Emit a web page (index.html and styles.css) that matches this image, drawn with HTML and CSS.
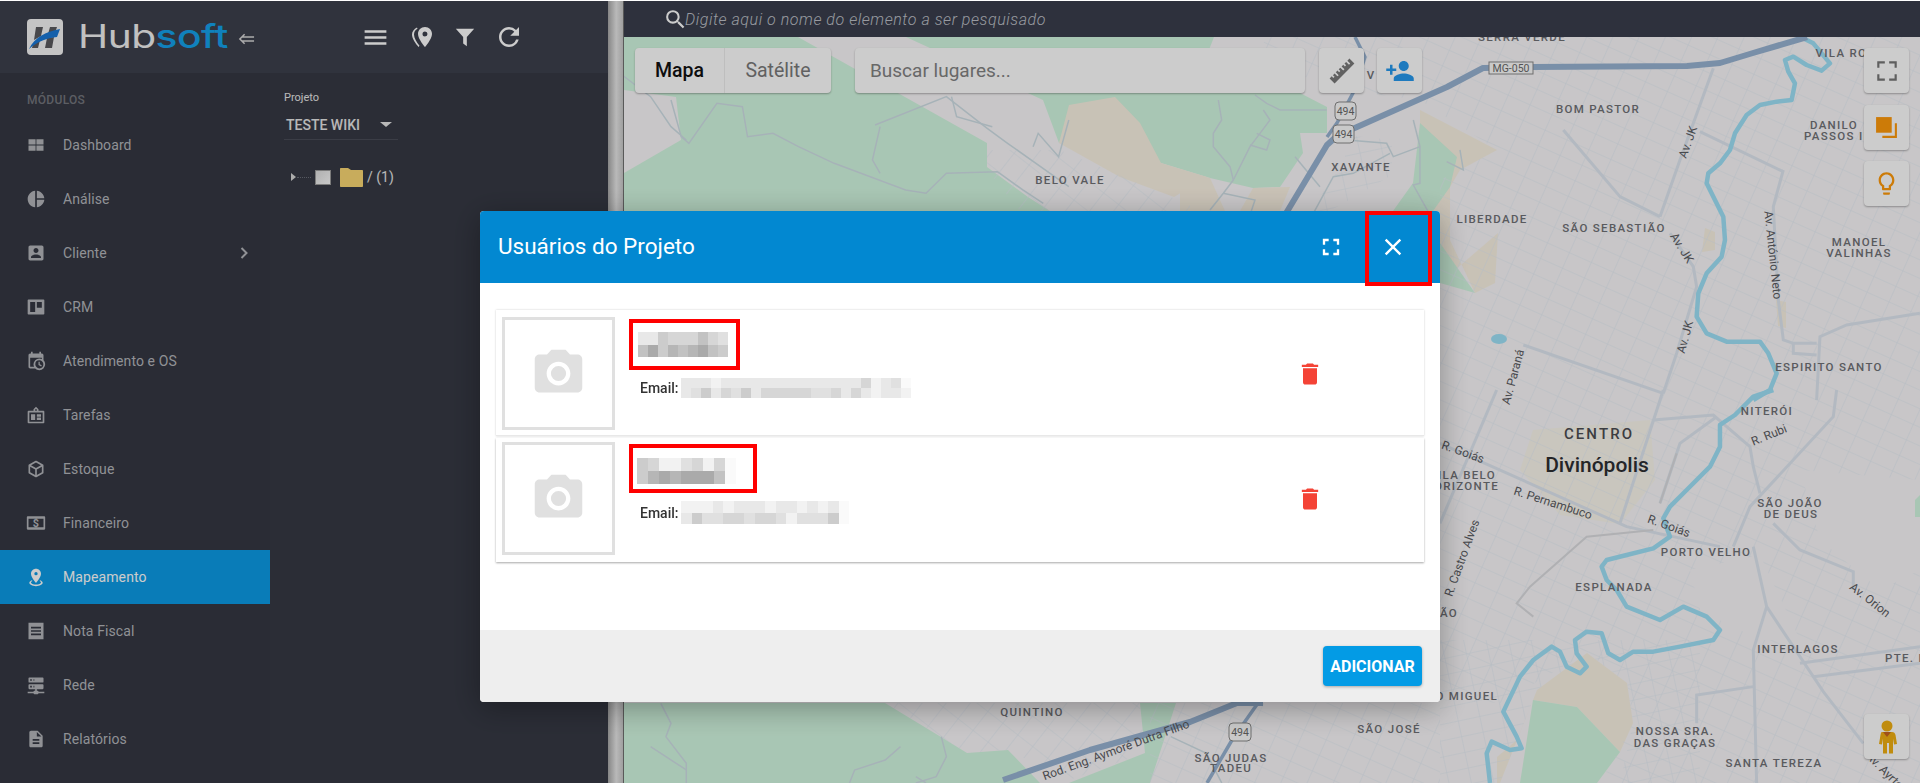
FILE: index.html
```html
<!DOCTYPE html>
<html lang="pt-BR">
<head>
<meta charset="utf-8">
<title>Hubsoft - Mapeamento</title>
<link rel="stylesheet" href="styles.css">
</head>
<body>
<div class="app">
  <aside class="sidebar">
    <div class="brand">
      <svg class="logo" viewBox="0 0 36 36">
        <rect width="36" height="36" rx="4" fill="#f6f6f6"/>
        <path d="M9 8h7l-2 9-7 4zM6 25l7-4-2 8H5zM23 8h7l-2 6-7 1zM20 19l7-1-2 11h-7z" fill="#5a5a5e"/>
        <path d="M2 30C8 18 18 13 33 10l-3 8C20 19 11 22 2 30z" fill="#1a78d6"/>
      </svg>
      <span class="wordmark"><span class="word-hub">Hub</span><span class="word-soft">soft</span></span>
      <svg class="collapse" viewBox="0 0 18 12"><path d="M7 1L2 6l5 5M4 4h13M4 8h13" fill="none" stroke="#d8d8d8" stroke-width="1.6"/></svg>
    </div>
    <div class="nav-title">MÓDULOS</div>
    <ul class="nav">
      <li class="nav-item"><svg class="nav-icon" viewBox="0 0 24 24"><path d="M3 5h8.500v6.500H3zM12.500 5H21v6.500h-8.500zM3 12.500h8.500V19H3zM12.500 12.500H21V19h-8.500z"/></svg>Dashboard</li>
      <li class="nav-item"><svg class="nav-icon" viewBox="0 0 24 24"><path d="M11 2v20c-5.070-.5-9-4.790-9-10s3.930-9.500 9-10zm2.030 0v8.990H22c-.47-4.740-4.240-8.520-8.970-8.990zm0 11.010V22c4.740-.47 8.500-4.250 8.970-8.990h-8.970z"/></svg>Análise</li>
      <li class="nav-item"><svg class="nav-icon" viewBox="0 0 24 24"><path d="M3 5v14c0 1.100.89 2 2 2h14c1.100 0 2-.9 2-2V5c0-1.100-.9-2-2-2H5c-1.110 0-2 .9-2 2zm12 4c0 1.660-1.340 3-3 3s-3-1.340-3-3 1.340-3 3-3 3 1.340 3 3zm-9 8c0-2 4-3.100 6-3.100s6 1.100 6 3.100v1H6v-1z"/></svg>Cliente<svg class="nav-chevron" viewBox="0 0 8 12"><path d="M1.500 1l5 5-5 5" fill="none" stroke="currentColor" stroke-width="2"/></svg></li>
      <li class="nav-item"><svg class="nav-icon" viewBox="0 0 24 24"><path d="M3 3h18c.6 0 1 .4 1 1v16c0 .6-.4 1-1 1H3c-.6 0-1-.4-1-1V4c0-.6.4-1 1-1zm2 3v12h6V6H5zm8 0v7h6V6h-6z"/></svg>CRM</li>
      <li class="nav-item"><svg class="nav-icon" viewBox="0 0 24 24"><path d="M15,13H16.500V15.820L18.940,17.230L18.190,18.530L15,16.690V13M19,8H5V19H9.670C9.240,18.090 9,17.070 9,16A7,7 0 0,1 16,9C17.070,9 18.090,9.240 19,9.670V8M5,21C3.890,21 3,20.100 3,19V5C3,3.890 3.890,3 5,3H6V1H8V3H16V1H18V3H19A2,2 0 0,1 21,5V11.100C22.240,12.360 23,14.090 23,16A7,7 0 0,1 16,23C14.090,23 12.360,22.240 11.100,21H5M16,11.150A4.850,4.850 0 0,0 11.150,16C11.150,18.680 13.320,20.850 16,20.850A4.850,4.850 0 0,0 20.850,16C20.850,13.320 18.680,11.150 16,11.150Z"/></svg>Atendimento e OS</li>
      <li class="nav-item"><svg class="nav-icon" viewBox="0 0 24 24"><path fill-rule="evenodd" d="M3 7h6V5l3-3 3 3v2h6c.6 0 1 .4 1 1v13c0 .6-.4 1-1 1H3c-.6 0-1-.4-1-1V8c0-.6.4-1 1-1zm1 2v11h16V9H4zm2 2h5v7H6zm7 0h5v3h-5zm0 4h5v3h-5zM11 5v2h2V5z"/></svg>Tarefas</li>
      <li class="nav-item"><svg class="nav-icon" viewBox="0 0 24 24"><path d="M21,16.500C21,16.880 20.790,17.210 20.470,17.380L12.570,21.820C12.410,21.940 12.210,22 12,22C11.790,22 11.590,21.940 11.430,21.820L3.530,17.380C3.210,17.210 3,16.880 3,16.500V7.500C3,7.120 3.210,6.790 3.530,6.620L11.430,2.180C11.590,2.060 11.790,2 12,2C12.210,2 12.410,2.060 12.570,2.180L20.470,6.620C20.790,6.790 21,7.120 21,7.500V16.500M12,4.150L6.040,7.500L12,10.850L17.960,7.500L12,4.150M5,15.910L11,19.290V12.580L5,9.210V15.910M19,15.910V9.210L13,12.580V19.290L19,15.910Z"/></svg>Estoque</li>
      <li class="nav-item"><svg class="nav-icon" viewBox="0 0 24 24"><path fill-rule="evenodd" d="M2 4h20c.6 0 1 .4 1 1v14c0 .6-.4 1-1 1H2c-.6 0-1-.4-1-1V5c0-.6.4-1 1-1zm1 3v10h18V7H3z"/><text class="nav-icon-glyph" x="12" y="16.500">$</text></svg>Financeiro</li>
      <li class="nav-item is-active"><svg class="nav-icon" viewBox="0 0 24 24"><path d="M12,2C15.310,2 18,4.660 18,7.950C18,12.410 12,19 12,19C12,19 6,12.410 6,7.950C6,4.660 8.690,2 12,2M12,6A2,2 0 0,0 10,8A2,2 0 0,0 12,10A2,2 0 0,0 14,8A2,2 0 0,0 12,6M20,19C20,21.210 16.420,23 12,23C7.580,23 4,21.210 4,19C4,17.710 5.220,16.560 7.110,15.830L7.750,16.740C6.670,17.190 6,17.810 6,18.500C6,19.880 8.690,21 12,21C15.310,21 18,19.880 18,18.500C18,17.810 17.330,17.190 16.250,16.740L16.890,15.830C18.780,16.560 20,17.710 20,19Z"/></svg>Mapeamento</li>
      <li class="nav-item"><svg class="nav-icon" viewBox="0 0 24 24"><path fill-rule="evenodd" d="M3 2h18v20H3zm3 5v2h12V7zm0 4v2h12v-2zm0 4v2h12v-2z"/></svg>Nota Fiscal</li>
      <li class="nav-item"><svg class="nav-icon" viewBox="0 0 24 24"><path d="M13,19H14A1,1 0 0,1 15,20H22V22H15A1,1 0 0,1 14,23H10A1,1 0 0,1 9,22H2V20H9A1,1 0 0,1 10,19H11V17H4A1,1 0 0,1 3,16V12A1,1 0 0,1 4,11H20A1,1 0 0,1 21,12V16A1,1 0 0,1 20,17H13V19M4,3H20A1,1 0 0,1 21,4V8A1,1 0 0,1 20,9H4A1,1 0 0,1 3,8V4A1,1 0 0,1 4,3M9,7H10V5H9V7M9,15H10V13H9V15M5,5V7H7V5H5M5,13V15H7V13H5Z"/></svg>Rede</li>
      <li class="nav-item"><svg class="nav-icon" viewBox="0 0 24 24"><path d="M14 2H6c-1.100 0-1.990.9-1.990 2L4 20c0 1.100.89 2 1.990 2H18c1.100 0 2-.9 2-2V8l-6-6zm2 16H8v-2h8v2zm0-4H8v-2h8v2zm-3-5V3.500L18.500 9H13z"/></svg>Relatórios</li>
    </ul>
  </aside>

  <section class="panel">
    <div class="panel-head">
      <svg class="tool tool-menu" viewBox="0 0 24 24"><path d="M3 18h18v-2H3v2zm0-5h18v-2H3v2zm0-7v2h18V6H3z"/></svg>
      <svg class="tool tool-pin" viewBox="0 0 24 24"><path fill-rule="evenodd" d="M15 2c-4 0-7 3-7 7 0 5 7 13 7 13s7-8 7-13c0-4-3-7-7-7zm0 9.500a2.500 2.500 0 110-5 2.500 2.500 0 010 5z"/><path d="M7 2.500C4 4 2 6.500 2 9.500c0 4 3.500 9 6.500 12.500l1-1.300C6.500 17 4 13 4 9.500 4 7 5.300 5 7.500 3.800z"/></svg>
      <svg class="tool tool-filter" viewBox="0 0 24 24"><path d="M2 3h20l-8 9v10l-4-3v-7z"/></svg>
      <svg class="tool tool-refresh" viewBox="0 0 24 24"><path d="M17.650 6.350A7.960 7.960 0 0012 4c-4.420 0-7.990 3.580-7.990 8s3.570 8 7.990 8c3.730 0 6.840-2.550 7.730-6h-2.080A5.990 5.990 0 0112 18c-3.310 0-6-2.690-6-6s2.690-6 6-6c1.660 0 3.140.69 4.220 1.780L13 11h7V4l-2.350 2.350z"/></svg>
    </div>
    <div class="panel-body">
      <div class="field-label">Projeto</div>
      <div class="select"><span>TESTE WIKI</span><i class="select-caret"></i></div>
      <div class="tree-row">
        <i class="tree-arrow"></i><i class="tree-line"></i><i class="tree-check"></i>
        <svg class="tree-folder" viewBox="0 0 23 19"><path d="M1 0h7l3 2h11c.6 0 1 .4 1 1v15c0 .6-.4 1-1 1H1c-.6 0-1-.4-1-1V1c0-.6.4-1 1-1z"/></svg>
        <span class="tree-text">/ (1)</span>
      </div>
    </div>
  </section>

  <div class="gutter"></div>

  <main class="main">
    <div class="searchbar">
      <svg class="search-icon" viewBox="0 0 24 24"><path d="M15.500 14h-.79l-.28-.27A6.470 6.470 0 0016 9.500 6.500 6.500 0 109.500 16c1.610 0 3.090-.59 4.230-1.570l.27.28v.79l5 4.990L20.490 19l-4.990-5zm-6 0C7.010 14 5 11.990 5 9.500S7.010 5 9.500 5 14 7.010 14 9.500 11.990 14 9.500 14z"/></svg>
      <span class="search-hint">Digite aqui o nome do elemento a ser pesquisado</span>
    </div>
    <div class="map">
      <svg class="map-canvas" viewBox="624 37 1296 746">
        <defs>
          <pattern id="grid-a" patternUnits="userSpaceOnUse" width="24" height="17" patternTransform="rotate(24)"><path d="M0 0H24M0 0V17" class="grid-line"/></pattern>
          <pattern id="grid-b" patternUnits="userSpaceOnUse" width="19" height="24" patternTransform="rotate(38)"><path d="M0 0H19M0 0V24" class="grid-line"/></pattern>
          <pattern id="grid-c" patternUnits="userSpaceOnUse" width="22" height="16" patternTransform="rotate(-12)"><path d="M0 0H22M0 0V16" class="grid-line"/></pattern>
        </defs>
        <rect class="land" x="624" y="37" width="1296" height="746"/>

        <!-- parks and built-up zones -->
        <polygon class="park" points="624,37 798,37 987,143 987,167 1028,197 1050,211 624,211"/>
        <polygon class="land" points="624,90 676,97 681,140 624,173"/>
        <polygon class="park" points="906,37 1214,37 1205,60 1240,85 1300,93 1327,107 1327,133 1300,133 1303,153 1280,187 1253,188 1210,178 1161,163 1115,150 1059,143 1043,100"/>
        <polygon class="sand" points="1069,105 1115,97 1140,123 1161,163 1207,177 1174,197 1120,177 1059,143"/>
        <polygon class="sand" points="1180,170 1210,178 1225,211 1180,211"/>
        <polygon class="sand" points="1253,188 1290,187 1280,211 1240,211"/>
        <polygon class="sand" points="1420,110 1497,150 1460,170 1450,187 1450,240 1475,293 1495,283 1498,233 1440,283 1420,211"/>
        <polygon class="park" points="1420,123 1457,157 1450,187 1433,211 1393,211 1413,183"/>
        <polygon class="park" points="1440,243 1475,293 1440,283"/>
        <polygon class="park" points="624,703 885,703 941,737 967,753 1008,750 1040,783 624,783"/>
        <polygon class="park" points="1140,703 1176,703 1150,783 1069,783 1145,753"/>
        <polygon class="sand" points="1537,690 1587,653 1627,683 1633,723 1620,752 1577,707 1533,700 1517,740 1497,757 1497,783 1520,783 1500,783"/>
        <polygon class="park" points="1533,700 1577,707 1620,752 1597,783 1520,783"/>
        <polygon class="sand-soft" points="1533,430 1650,420 1655,480 1620,524 1560,515 1520,470"/>
        <polygon class="sand" points="1705,228 1715,232 1715,250 1702,252"/>
        <polygon class="sand" points="1776,300 1786,302 1786,328 1778,326"/>
        <polygon class="park" points="1915,500 1920,495 1920,517 1915,517"/>

        <!-- urban street grids -->
        <polygon fill="url(#grid-a)" points="1265,37 1920,37 1920,480 1800,470 1820,540 1880,590 1920,570 1920,783 1600,783 1633,723 1627,683 1587,653 1500,703 1440,700 1440,180 1497,150 1420,100 1340,90 1260,60"/>
        <polygon fill="url(#grid-c)" points="1440,640 1700,640 1700,783 1620,783 1633,723 1627,683 1587,653 1537,690 1500,783 1440,783"/>
        <polygon fill="url(#grid-c)" points="1345,135 1392,140 1392,175 1330,211 1310,211 1345,160"/>
        <polygon fill="url(#grid-a)" points="1150,703 1440,703 1440,783 1150,783"/>
        <polygon fill="url(#grid-b)" points="987,150 1060,150 1190,205 1190,211 1020,211 987,170"/>
        <polygon fill="url(#grid-b)" points="885,703 1140,703 1145,753 1069,780 1008,750 967,753 941,737"/>
        <polygon class="land" points="1690,570 1760,555 1800,640 1760,640 1700,610"/>

        <!-- minor paths over the green area -->
        <g transform="translate(620 0) scale(.51 .3333)" class="trail">
          <polyline points="100,300 120,410 135,430 190,310 240,320 250,410 300,400 350,440 420,490 560,570 600,580 640,520 740,515 790,570 830,610"/>
          <polyline points="500,375 640,290 720,385 760,430 880,560"/>
          <polyline points="510,380 495,480 510,520"/>
          <polyline points="650,290 660,350 730,380"/>
          <polyline points="880,360 860,470 820,400 810,440"/>
          <polyline points="0,220 60,290 100,380 130,420"/>
        </g>
        <g transform="translate(620 690) scale(.51 .3333)" class="trail">
          <polyline points="80,40 100,100 90,140 130,220 130,279"/>
          <polyline points="60,170 130,240"/>
          <polyline points="550,170 520,210 460,240 450,279"/>
          <polyline points="580,260 600,279"/>
          <polyline points="630,140 640,200 620,260 580,279"/>
          <polyline points="1080,140 1150,190 1180,279"/>
        </g>
        <g transform="translate(1180 90) scale(.3333)" class="trail">
          <polyline points="115,30 125,90 100,130 100,170 150,230 160,270 130,310 90,360"/>
          <polyline points="225,15 260,40 300,60 440,60"/>
          <polyline points="250,60 270,90 240,130 210,170 160,270"/>
          <polyline points="230,130 270,150 260,180 210,165"/>
          <polyline points="130,310 225,330 210,375"/>
          <polyline points="345,200 420,290"/>
          <polyline points="700,90 720,170 720,280 700,285 750,375"/>
          <polyline points="720,170 640,200 620,160 500,150"/>
          <polyline points="630,190 520,250 460,260 400,370"/>
          <polyline points="840,180 850,240 800,215"/>
        </g>

        <!-- main streets, right side -->
        <g transform="translate(1420 0) scale(.3333)" class="street">
          <polyline points="880,205 820,370 780,480 720,650"/>
          <polyline points="750,700 820,800 830,860 800,960 770,1060 730,1180"/>
          <polyline points="840,395 1090,515"/>
          <polyline points="1090,510 1060,620 1075,900 1090,1020 1120,1030 1190,1030"/>
          <polyline points="1500,940 1280,975 1200,1010 1190,1200"/>
          <polyline points="310,1035 730,1180"/>
          <polyline points="430,390 600,590 720,650"/>
          <polyline points="1120,1030 1120,1060 1190,1065"/>
        </g>
        <g transform="translate(1420 390) scale(.3333)" class="street">
          <polyline points="60,160 620,410 900,470"/>
          <polyline points="1000,470 1040,650 1210,905 1330,1060"/>
          <polyline points="1040,650 1000,780 1010,1179"/>
          <polyline points="1500,770 1140,820"/>
          <polyline points="1500,820 1180,860"/>
          <polyline points="1000,890 830,915 830,1000"/>
          <polyline points="1060,400 1140,480 1300,545 1300,600"/>
          <polyline points="700,90 880,75 990,170 1000,230 1020,310"/>
          <polyline points="890,80 780,160 720,340"/>
          <polyline points="940,470 990,350 1240,80 1250,0"/>
          <polyline points="230,0 60,400"/>
          <polyline points="730,0 600,400"/>
        </g>
        <g transform="translate(1420 390) scale(.3333)" class="rail">
          <polyline points="770,190 720,340"/>
          <polyline points="700,420 500,440 330,590 290,640 340,680"/>
        </g>

        <!-- river -->
        <g class="river">
          <polyline transform="translate(1420 0) scale(.3333)" points="1150,115 1180,130 1205,160 1230,190 1205,212 1160,195 1120,170 1095,180 1105,215 1125,250 1115,300 1070,305 1020,315 980,345 945,400 930,450 900,490 865,520 860,550 885,600 910,650 915,720 905,770 860,820 835,880 830,950 860,1000 920,1025 1020,1025 1045,1060 1070,1120 1050,1170 1000,1200"/>
          <polyline transform="translate(1420 390) scale(.3333)" points="1060,0 1000,20 945,75 900,105 900,170 870,230 800,300 750,350 730,385 750,440 700,475 620,495 560,510 545,530 560,570 590,600 620,650 720,690 790,650 860,680 900,720 880,750 780,770 700,785 640,785 600,810 565,790 545,730 500,725 465,750 470,790 500,830 480,850 440,830 420,785 395,770 340,810 300,860 250,965 290,1040 305,1075 270,1080 215,1055 200,1090 210,1179"/>
          <ellipse class="pond" cx="1499" cy="339" rx="8" ry="5"/>
        </g>

        <!-- highways -->
        <g class="highway">
          <polyline points="1285,215 1327,145 1338,135 1357,127 1447,87 1483,68 1533,67 1687,66 1720,63 1753,53 1807,37"/>
          <polyline class="highway-thin" points="1355,37 1365,57 1353,93 1337,123 1327,137"/>
          <polyline points="1003,780 1090,750 1190,722 1237,703 1263,703"/>
          <polyline class="highway-thin" points="1258,703 1232,740 1207,783"/>
        </g>

        <!-- road signs -->
        <rect class="sign" x="1489" y="62" width="44" height="12"/><text class="sign-text" x="1511" y="72">MG-050</text>
        <rect class="sign" x="1335" y="102" width="21" height="18" rx="4"/><text class="sign-text" x="1345.500" y="115">494</text>
        <rect class="sign" x="1333" y="125" width="21" height="18" rx="4"/><text class="sign-text" x="1343.500" y="138">494</text>
        <rect class="sign" x="1229" y="723" width="22" height="18" rx="4"/><text class="sign-text" x="1240" y="736">494</text>

        <!-- place labels -->
        <g class="place">
          <text x="1522" y="41">SERRA VERDE</text>
          <text x="1850" y="57">VILA ROSA</text>
          <text x="1598" y="113">BOM PASTOR</text>
          <text x="1834" y="129">DANILO</text>
          <text x="1836" y="140">PASSOS II</text>
          <text x="1492" y="223">LIBERDADE</text>
          <text x="1614" y="232">SÃO SEBASTIÃO</text>
          <text x="1859" y="246">MANOEL</text>
          <text x="1859" y="257">VALINHAS</text>
          <text x="1829" y="371">ESPIRITO SANTO</text>
          <text x="1767" y="415">NITERÓI</text>
          <text class="end" x="1496" y="479">VILA BELO</text>
          <text class="end" x="1499" y="490">HORIZONTE</text>
          <text x="1790" y="507">SÃO JOÃO</text>
          <text x="1791" y="518">DE DEUS</text>
          <text x="1706" y="556">PORTO VELHO</text>
          <text x="1614" y="591">ESPLANADA</text>
          <text class="end" x="1458" y="617">ÃO</text>
          <text x="1798" y="653">INTERLAGOS</text>
          <text class="start" x="1885" y="662">PTE. R</text>
          <text class="end" x="1498" y="700">SÃO MIGUEL</text>
          <text x="1675" y="735">NOSSA SRA.</text>
          <text x="1675" y="747">DAS GRAÇAS</text>
          <text x="1774" y="767">SANTA TEREZA</text>
          <text x="1070" y="184">BELO VALE</text>
          <text x="1361" y="171">XAVANTE</text>
          <text x="1032" y="716">QUINTINO</text>
          <text x="1389" y="733">SÃO JOSÉ</text>
          <text x="1231" y="762">SÃO JUDAS</text>
          <text x="1231" y="772">TADEU</text>
          <text x="1371" y="79">V</text>
        </g>
        <text class="place-large" x="1599" y="439">CENTRO</text>
        <text class="city" x="1597" y="472">Divinópolis</text>
        <g class="road-name">
          <text transform="rotate(-70 1688 142)" x="1688" y="146">Av. JK</text>
          <text transform="rotate(58 1682 248)" x="1682" y="252">Av. JK</text>
          <text transform="rotate(84 1773 255)" x="1773" y="259">Av. António Neto</text>
          <text transform="rotate(-75 1685 337)" x="1685" y="341">Av. JK</text>
          <text transform="rotate(-75 1513 377)" x="1513" y="381">Av. Paraná</text>
          <text transform="rotate(-22 1769 435)" x="1769" y="439">R. Rubi</text>
          <text transform="rotate(20 1463 452)" x="1463" y="456">R. Goiás</text>
          <text transform="rotate(18 1553 503)" x="1553" y="507">R. Pernambuco</text>
          <text transform="rotate(-70 1462 558)" x="1462" y="562">R. Castro Alves</text>
          <text transform="rotate(20 1669 526)" x="1669" y="530">R. Goiás</text>
          <text transform="rotate(38 1870 600)" x="1870" y="604">Av. Orion</text>
          <text transform="rotate(45 1887 773)" x="1887" y="777">Av. Ayrton</text>
          <text transform="rotate(-20 1116 750)" x="1116" y="754">Rod. Eng. Aymoré Dutra Filho</text>
        </g>
      </svg>

      <div class="map-top">
        <div class="map-types map-box">
          <span class="map-type is-on">Mapa</span>
          <span class="map-type">Satélite</span>
        </div>
        <div class="place-search map-box">Buscar lugares...</div>
        <button class="map-btn map-box"><svg viewBox="0 0 24 24" class="ic-ruler"><path d="M1.390,18.360L3.160,16.600L4.580,18L5.640,16.950L4.220,15.540L5.640,14.120L8.110,16.600L9.170,15.540L6.700,13.060L8.110,11.650L9.530,13.060L10.590,12L9.170,10.590L10.590,9.170L13.060,11.650L14.120,10.590L11.650,8.110L13.060,6.700L14.470,8.110L15.540,7.050L14.120,5.640L15.540,4.220L18,6.700L19.070,5.640L16.600,3.160L18.360,1.390L22.610,5.640L5.640,22.610L1.390,18.360Z"/></svg></button>
        <button class="map-btn map-box"><svg viewBox="0 0 24 24" class="ic-person"><path d="M15 12c2.210 0 4-1.790 4-4s-1.790-4-4-4-4 1.790-4 4 1.790 4 4 4zm-9-2V7H4v3H1v2h3v3h2v-3h3v-2H6zm9 4c-2.670 0-8 1.340-8 4v2h16v-2c0-2.660-5.330-4-8-4z"/></svg></button>
      </div>

      <div class="map-side">
        <button class="map-btn map-box"><svg viewBox="0 0 24 24" class="ic-dark"><path d="M3 3h7v2H5v4H3zM14 3h7v6h-2V5h-5zM3 15h2v4h5v2H3zM19 15h2v6h-7v-2h5z"/></svg></button>
        <button class="map-btn map-box"><svg viewBox="0 0 24 24" class="ic-orange"><path d="M2 2h15v15H2z"/><path d="M22 8v14H8v-2h12V8z"/></svg></button>
        <button class="map-btn map-box"><svg viewBox="0 0 24 24" class="ic-orange ic-bulb"><path d="M9 21c0 .55.45 1 1 1h4c.55 0 1-.45 1-1v-1H9v1zm3-19C8.140 2 5 5.140 5 9c0 2.380 1.190 4.470 3 5.740V17c0 .55.45 1 1 1h6c.55 0 1-.45 1-1v-2.260c1.810-1.270 3-3.360 3-5.740 0-3.860-3.140-7-7-7zm2.850 11.100l-.85.6V16h-4v-2.300l-.85-.6C7.800 12.160 7 10.630 7 9c0-2.760 2.240-5 5-5s5 2.240 5 5c0 1.630-.8 3.160-2.150 4.100z"/></svg></button>
      </div>

      <button class="map-btn map-box pegman-btn">
        <svg viewBox="0 0 20 34" class="pegman">
          <circle cx="10" cy="6" r="5.500" fill="#f0b012"/>
          <path d="M5 12h10c2 0 3 1 3.500 3l1.500 9-3 .5-1-6v15h-4V23h-2v10.500H6v-15l-1 6-3-.5 1.500-9C4 13 4 12 5 12z" fill="#f0b012"/>
          <path d="M6 12h8l-4 5z" fill="#c8641e"/>
        </svg>
      </button>
    </div>
  </main>
</div>

<div class="scrim"></div>

<div class="modal">
  <header class="modal-head">
    <h2 class="modal-title">Usuários do Projeto</h2>
    <svg class="modal-expand" viewBox="0 0 24 24"><path d="M7 14H5v5h5v-2H7v-3zm-2-4h2V7h3V5H5v5zm12 7h-3v2h5v-5h-2v3zM14 5v2h3v3h2V5h-5z"/></svg>
    <div class="modal-close"><svg viewBox="0 0 24 24"><path d="M19 6.410L17.590 5 12 10.590 6.410 5 5 6.410 10.590 12 5 17.590 6.410 19 12 13.410 17.590 19 19 17.590 13.410 12z"/></svg></div>
  </header>
  <div class="modal-body">
    <article class="user user-first">
      <div class="photo"><svg viewBox="0 0 24 24"><path d="M12 15.200a3.200 3.200 0 100-6.400 3.200 3.200 0 000 6.400z"/><path d="M9 2L7.170 4H4c-1.100 0-2 .9-2 2v12c0 1.100.9 2 2 2h16c1.100 0 2-.9 2-2V6c0-1.100-.9-2-2-2h-3.170L15 2H9zm3 15c-2.760 0-5-2.240-5-5s2.240-5 5-5 5 2.240 5 5-2.240 5-5 5z"/></svg></div>
      <div class="user-info">
        <div class="name-mark name-mark-a">
          <div class="mosaic mosaic-name-a">
            <i class="g2"></i><i class="g2"></i><i class="g5"></i><i class="g4"></i><i class="g4"></i><i class="g4"></i><i class="g6"></i><i class="g4"></i><i class="g3"></i>
            <i class="g6"></i><i class="g8"></i><i class="g5"></i><i class="g7"></i><i class="g6"></i><i class="g7"></i><i class="g8"></i><i class="g6"></i><i class="g5"></i>
          </div>
        </div>
        <div class="email email-a">
          <span class="email-label">Email:</span>
          <div class="mosaic mosaic-mail-a">
            <i class="g2"></i><i class="g2"></i><i class="g2"></i><i class="g1"></i><i class="g2"></i><i class="g2"></i><i class="g2"></i><i class="g2"></i><i class="g2"></i><i class="g2"></i><i class="g2"></i><i class="g2"></i><i class="g2"></i><i class="g2"></i><i class="g2"></i><i class="g2"></i><i class="g2"></i><i class="g2"></i><i class="g4"></i><i class="g1"></i><i class="g2"></i><i class="g3"></i><i class="g0"></i>
            <i class="g2"></i><i class="g3"></i><i class="g5"></i><i class="g2"></i><i class="g4"></i><i class="g3"></i><i class="g5"></i><i class="g2"></i><i class="g4"></i><i class="g4"></i><i class="g4"></i><i class="g4"></i><i class="g4"></i><i class="g3"></i><i class="g3"></i><i class="g4"></i><i class="g2"></i><i class="g4"></i><i class="g2"></i><i class="g1"></i><i class="g2"></i><i class="g2"></i><i class="g1"></i>
          </div>
        </div>
      </div>
      <svg class="user-delete" viewBox="0 0 24 24"><path d="M6 19c0 1.100.9 2 2 2h8c1.100 0 2-.9 2-2V7H6v12zM19 4h-3.500l-1-1h-5l-1 1H5v2h14V4z"/></svg>
    </article>
    <article class="user user-last">
      <div class="photo"><svg viewBox="0 0 24 24"><path d="M12 15.200a3.200 3.200 0 100-6.400 3.200 3.200 0 000 6.400z"/><path d="M9 2L7.170 4H4c-1.100 0-2 .9-2 2v12c0 1.100.9 2 2 2h16c1.100 0 2-.9 2-2V6c0-1.100-.9-2-2-2h-3.170L15 2H9zm3 15c-2.760 0-5-2.240-5-5s2.240-5 5-5 5 2.240 5 5-2.240 5-5 5z"/></svg></div>
      <div class="user-info">
        <div class="name-mark name-mark-b">
          <div class="mosaic mosaic-name-b">
            <i class="g5"></i><i class="g4"></i><i class="g1"></i><i class="g1"></i><i class="g3"></i><i class="g4"></i><i class="g1"></i><i class="g4"></i><i class="g0"></i>
            <i class="g5"></i><i class="g7"></i><i class="g8"></i><i class="g7"></i><i class="g8"></i><i class="g8"></i><i class="g8"></i><i class="g6"></i><i class="g0"></i>
          </div>
        </div>
        <div class="email email-b">
          <span class="email-label">Email:</span>
          <div class="mosaic mosaic-mail-b">
            <i class="g1"></i><i class="g1"></i><i class="g1"></i><i class="g2"></i><i class="g1"></i><i class="g2"></i><i class="g2"></i><i class="g2"></i><i class="g1"></i><i class="g2"></i><i class="g2"></i><i class="g1"></i><i class="g2"></i><i class="g1"></i><i class="g2"></i><i class="g0"></i>
            <i class="g2"></i><i class="g5"></i><i class="g3"></i><i class="g3"></i><i class="g4"></i><i class="g4"></i><i class="g3"></i><i class="g4"></i><i class="g4"></i><i class="g3"></i><i class="g1"></i><i class="g3"></i><i class="g3"></i><i class="g3"></i><i class="g5"></i><i class="g0"></i>
          </div>
        </div>
      </div>
      <svg class="user-delete" viewBox="0 0 24 24"><path d="M6 19c0 1.100.9 2 2 2h8c1.100 0 2-.9 2-2V7H6v12zM19 4h-3.500l-1-1h-5l-1 1H5v2h14V4z"/></svg>
    </article>
  </div>
  <footer class="modal-foot">
    <button class="btn-add">ADICIONAR</button>
  </footer>
</div>
</body>
</html>
```

FILE: styles.css
```css
* { box-sizing: border-box; }
html, body { margin: 0; height: 783px; overflow: hidden; }
body { padding-top: 1px; background: #fff; font-family: Roboto, "Liberation Sans", sans-serif; }
ul { margin: 0; padding: 0; list-style: none; }
button { border: 0; padding: 0; font: inherit; }

.app { display: flex; height: 782px; }

/* sidebar (colours are before the 20% modal scrim) */
.sidebar { width: 270px; flex: none; background: #353843; }
.brand { height: 72px; background: #3d404d; display: flex; align-items: center; padding-left: 27px; }
.logo { width: 36px; height: 36px; flex: none; }
.wordmark { font: 400 32px/1 Inter, sans-serif; margin-left: 15px; width: 149px; flex: none; transform: scaleX(1.27); transform-origin: left center; letter-spacing: -.4px; white-space: nowrap; }
.word-hub { color: #f2f2f2; }
.word-soft { color: #14a2ec; font-weight: 500; }
.collapse { width: 17px; height: 12px; margin-left: 11px; flex: none; margin-top: 3px; }
.nav-title { font-size: 12px; font-weight: 500; color: #74767d; padding: 20px 0 0 27px; height: 45px; line-height: 14px; letter-spacing: .3px; }
.nav-item { height: 54px; display: flex; align-items: center; padding-left: 26px; font-size: 14px; letter-spacing: .1px; color: #b4b6bb; position: relative; }
.nav-icon { width: 20px; height: 20px; fill: #b4b6bb; margin-right: 17px; flex: none; }
.nav-icon-glyph { font: 700 13px Roboto, sans-serif; text-anchor: middle; }
.nav-chevron { width: 8px; height: 12px; margin-left: 133px; color: #b4b6bb; flex: none; }
.is-active { background: #0c9ce6; color: #fff; }
.is-active .nav-icon { fill: #fff; }

/* project panel */
.panel { width: 338px; flex: none; background: #363944; }
.panel-head { height: 72px; background: #3d404d; display: flex; align-items: center; gap: 20px; padding-left: 91px; }
.tool { fill: #fff; flex: none; }
.tool-menu { width: 29px; height: 29px; }
.tool-pin { width: 24px; height: 24px; }
.tool-filter { width: 22px; height: 24px; }
.tool-refresh { width: 30px; height: 30px; margin-left: -2px; }
.panel-body { padding: 18px 0 0 14px; }
.field-label { font-size: 11px; line-height: 14px; color: #e8e8e8; }
.select { width: 114px; height: 35px; padding: 5px 6px 0 2px; border-bottom: 1px solid #4a4d58; display: flex; align-items: center; justify-content: space-between; font-size: 14px; font-weight: 500; color: #e6e6e6; }
.select-caret { width: 0; height: 0; border: 6px solid transparent; border-top: 5px solid #e6e6e6; border-bottom: 0; }
.tree-row { margin-top: 25px; height: 24px; display: flex; align-items: center; padding-left: 7px; color: #e6e6e6; font-size: 14px; }
.tree-arrow { width: 0; height: 0; border: 4px solid transparent; border-left: 5px solid #d8d8d8; border-right: 0; flex: none; }
.tree-line { width: 14px; border-top: 1px dotted #6b6e78; margin: 0 4px 0 1px; flex: none; }
.tree-check { width: 16px; height: 15px; border: 1px solid #9a9a9a; background: linear-gradient(135deg, #ddd, #fafafa); flex: none; }
.tree-folder { width: 23px; height: 19px; fill: #fbd873; margin-left: 9px; flex: none; }
.tree-text { margin-left: 4px; }

.gutter { width: 15px; flex: none; background: linear-gradient(90deg, #a8a8a8, #e8e8e8 55%, #c8c8c8); }

/* main */
.main { flex: 1; min-width: 0; border-left: 1px solid #707070; display: flex; flex-direction: column; }
.searchbar { height: 36px; flex: none; background: #3a3e4d; display: flex; align-items: center; padding-left: 39px; }
.search-icon { width: 25px; height: 25px; fill: #fff; flex: none; margin-right: -3px; }
.search-hint { font-size: 16px; letter-spacing: .55px; font-style: italic; font-weight: 300; color: #bfc1c8; }

.map { flex: 1; position: relative; overflow: hidden; }
.map-canvas { display: block; width: 1296px; height: 746px; position: absolute; left: 0; top: 0; }
.land { fill: #faf8fa; }
.park { fill: #d3f8e1; }
.sand { fill: #fbf3e4; }
.sand-soft { fill: #fcf8ee; }
.grid-line { fill: none; stroke: #e6edf6; stroke-width: 1.100; }
.trail polyline { fill: none; stroke: #d0dfe6; stroke-width: 1.500px; vector-effect: non-scaling-stroke; }
.street polyline { fill: none; stroke: #e0e8f2; stroke-width: 3px; vector-effect: non-scaling-stroke; }
.rail polyline { fill: none; stroke: #dcdde0; stroke-width: 2px; vector-effect: non-scaling-stroke; }
.river polyline { fill: none; stroke: #9fe2f8; stroke-width: 4.500px; stroke-linejoin: round; vector-effect: non-scaling-stroke; }
.pond { fill: #9fe2f8; }
.highway polyline { fill: none; stroke: #98b3d2; stroke-width: 6px; stroke-linejoin: round; }
.highway .highway-thin { stroke-width: 3.500px; }
.sign { fill: #fcfcfc; stroke: #8a8a8a; stroke-width: 1; }
.sign-text { font: 400 10.500px Roboto, sans-serif; fill: #6a6a6a; text-anchor: middle; }
.place text { font: 500 11.500px Roboto, sans-serif; letter-spacing: 1.300px; fill: #707176; text-anchor: middle; }
.place .end { text-anchor: end; }
.place .start { text-anchor: start; }
.place-large { font: 500 15px Roboto, sans-serif; letter-spacing: 2.100px; fill: #4c4d52; text-anchor: middle; }
.city { font: 500 21px Roboto, sans-serif; fill: #2e2f33; text-anchor: middle; }
.road-name text { font: 400 12px Roboto, sans-serif; fill: #5a5c62; text-anchor: middle; }

.map-box { background: #fff; border-radius: 4px; box-shadow: 0 1px 2px rgba(0,0,0,.3); }
.map-top { position: absolute; left: 11px; top: 11px; display: flex; align-items: center; gap: 13px; }
.map-types { width: 196px; height: 45px; display: flex; font-size: 19.500px; margin-right: 11px; }
.map-type { flex: 1; display: flex; align-items: center; justify-content: center; color: #7a7a7a; }
.map-type.is-on { flex: none; width: 90px; color: #111; font-weight: 500; border-right: 1px solid #eee; }
.place-search { width: 450px; height: 45px; margin-right: 1px; display: flex; align-items: center; padding-left: 15px; font-size: 19px; color: #828282; }
.map-btn { width: 45px; height: 45px; display: flex; align-items: center; justify-content: center; }
.map-side { position: absolute; right: 11px; top: 11px; display: flex; flex-direction: column; gap: 11.500px; }
.ic-ruler { width: 28px; height: 28px; fill: #7a7a7a; }
.ic-person { width: 30px; height: 30px; fill: #2699ee; }
.ic-dark { width: 26px; height: 26px; fill: #777; }
.ic-orange { width: 25px; height: 25px; fill: #ff9a0a; }
.ic-bulb { width: 27px; height: 27px; }
.pegman-btn { position: absolute; right: 11px; bottom: 24px; }
.pegman { width: 20px; height: 34px; }

/* overlay */
.scrim { position: fixed; left: 0; right: 0; top: 1px; bottom: 0; background: rgba(0,0,0,.2); }
.modal { position: fixed; left: 480px; top: 211px; width: 960px; height: 491px; background: #fff; border-radius: 4px; display: flex; flex-direction: column; box-shadow: 0 6px 30px rgba(0,0,0,.32); }
.modal-head { height: 72px; flex: none; background: #0288d1; border-radius: 4px 4px 0 0; display: flex; align-items: flex-start; padding: 0 8px 0 18px; position: relative; z-index: 1; }
.modal-title { margin: 0; flex: 1; font-size: 22.500px; font-weight: 400; line-height: 70px; color: #fff; }
.modal-expand { width: 28px; height: 28px; fill: #fff; margin: 22px 20px 0 0; flex: none; }
.modal-close { width: 67px; height: 75px; border: 4px solid #f00; flex: none; display: flex; align-items: center; justify-content: center; padding-right: 11px; }
.modal-close svg { width: 28px; height: 28px; fill: #fff; margin-top: -3px; }
.modal-body { flex: 1; padding: 27px 16px 0; }
.user { height: 126px; display: flex; align-items: flex-start; padding: 7px 6px 0; background: #fff; box-shadow: 0 0 2px rgba(0,0,0,.2); }
.user-first { border-bottom: 1px solid #e8e8e8; }
.user-last { height: 124px; margin-top: 2px; padding-top: 4px; box-shadow: 0 1px 2px rgba(0,0,0,.35); }
.photo { width: 113px; height: 113px; border: 3px solid #e0e0e0; display: flex; align-items: center; justify-content: center; flex: none; }
.photo svg { width: 57px; height: 57px; fill: #e0e0e0; }
.user-info { flex: 1; padding: 2px 0 0 14px; }
.name-mark { border: 4px solid #f00; }
.name-mark-a { width: 111px; height: 51px; padding: 9px 0 0 5px; }
.name-mark-b { width: 128px; height: 49px; padding: 10px 0 0 4px; }
.mosaic { display: grid; }
.mosaic-name-a { grid-template-columns: repeat(9, 10px); grid-auto-rows: 12.500px; }
.mosaic-name-b { grid-template-columns: repeat(9, 11px); grid-auto-rows: 13px; }
.mosaic-mail-a { grid-template-columns: repeat(23, 10px); grid-auto-rows: 10px; }
.mosaic-mail-b { grid-template-columns: repeat(16, 10.500px); grid-auto-rows: 11.500px; }
.g0 { background: #fafafa; } .g1 { background: #f2f2f2; } .g2 { background: #e8e8e8; }
.g3 { background: #e0e0e0; } .g4 { background: #d6d6d6; } .g5 { background: #ccc; }
.g6 { background: #c2c2c2; } .g7 { background: #b6b6b6; } .g8 { background: #aaa; }
.email { display: flex; align-items: center; margin-top: 8px; padding-left: 11px; }
.email-label { font-size: 14px; font-weight: 500; color: #333; margin-right: 3px; }
.user-delete { width: 28px; height: 28px; fill: #f44336; flex: none; margin: 43px 94px 0 0; }
.modal-foot { height: 72px; flex: none; background: #eee; border-radius: 0 0 4px 4px; display: flex; justify-content: flex-end; padding: 16px 18px 0 0; }
.btn-add { width: 99px; height: 40px; border-radius: 4px; background: #039be5; color: #fff; font-size: 16px; font-weight: 700; box-shadow: 0 1px 3px rgba(0,0,0,.3); }
```
